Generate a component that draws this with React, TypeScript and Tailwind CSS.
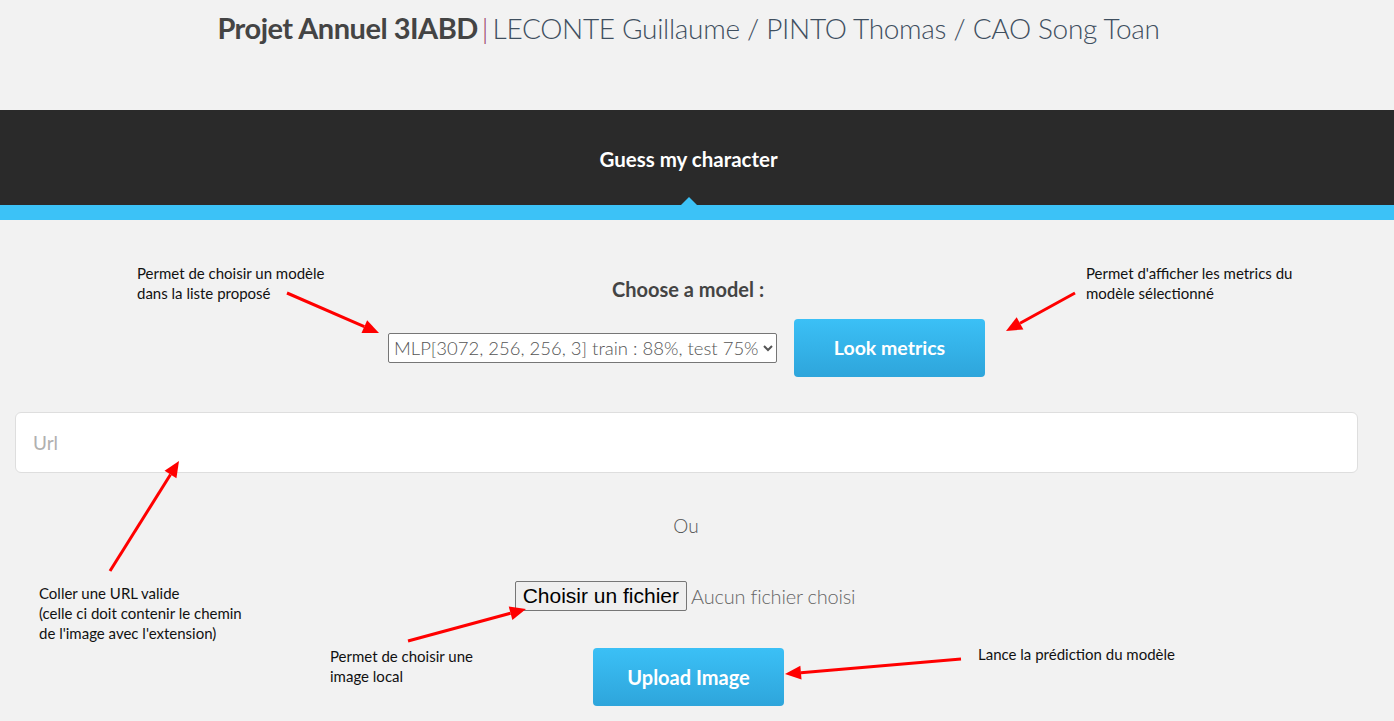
import React from "react";

const Arrow = ({ x1, y1, x2, y2 }: { x1: number; y1: number; x2: number; y2: number }) => {
  const a = Math.atan2(y2 - y1, x2 - x1);
  const L = 16;
  const W = 7;
  const bx = x2 - L * Math.cos(a);
  const by = y2 - L * Math.sin(a);
  const px = -Math.sin(a) * W;
  const py = Math.cos(a) * W;
  return (
    <g>
      <line x1={x1} y1={y1} x2={bx} y2={by} stroke="#ff0000" strokeWidth={3} />
      <polygon points={`${x2},${y2} ${bx + px},${by + py} ${bx - px},${by - py}`} fill="#ff0000" />
    </g>
  );
};

const Note = ({ x, y, children }: { x: number; y: number; children: React.ReactNode }) => (
  <div
    className="absolute text-[15px] leading-[20px] text-[#111] font-['Lato','Open_Sans',sans-serif]"
    style={{ left: x, top: y }}
  >
    {children}
  </div>
);

export default function App() {
  return (
    <div className="relative w-[1394px] h-[721px] overflow-hidden bg-[#f2f2f2] font-['Source_Sans_Pro','Lato','Open_Sans',sans-serif]">
      <header className="w-[1377px] h-[110px] flex justify-center pt-[9px]">
        <h1 className="leading-[38px] text-[#3f4f5f] font-light whitespace-nowrap">
          <span className="font-bold text-[#444] text-[29px] tracking-[-0.5px]">Projet Annuel 3IABD</span>
          <span className="text-[#9b3b6b] mx-[4px] text-[28px]">|</span>
          <span className="text-[28px] tracking-[-0.3px]">LECONTE Guillaume / PINTO Thomas / CAO Song Toan</span>
        </h1>
      </header>

      <nav className="relative h-[95px] bg-[#2a2a2a]">
        <div className="w-[1377px] h-full flex items-center justify-center">
          <span className="text-white font-bold text-[20.5px] mt-[3px]">Guess my character</span>
        </div>
        <div className="absolute bottom-0 left-[681px] w-0 h-0 border-l-[8px] border-r-[8px] border-b-[8px] border-l-transparent border-r-transparent border-b-[#3cc2f7]" />
      </nav>
      <div className="h-[15px] bg-[#3cc2f7]" />

      <main className="w-[1377px] flex flex-col items-center">
        <div className="mt-[57px] text-[20px] font-bold text-[#444] leading-[25px] ml-[-1px]">Choose a model :</div>
        <div className="flex items-center gap-[17px] mt-[17px] ml-[-4px]">
          <select className="w-[389px] h-[30px] border border-[#767676] bg-white text-[#555] text-[18.5px] font-light px-[1px] rounded-[2px]">
            <option>MLP[3072, 256, 256, 3] train : 88%, test 75%</option>
          </select>
          <button className="w-[191px] h-[58px] rounded-[4px] bg-gradient-to-b from-[#3bc0f6] to-[#2ea5db] text-white font-bold text-[19.5px]">
            Look metrics
          </button>
        </div>

        <div className="self-stretch pl-[15px] pr-[19px] mt-[35px]">
          <input
            placeholder="Url"
            className="w-full h-[61px] bg-white border border-[#dedede] rounded-[6px] px-[17px] text-[19px] placeholder:text-[#b0b0b0] outline-none"
          />
        </div>

        <div className="mt-[41px] text-[19px] text-[#555] font-light leading-[24px] ml-[-5px]">Ou</div>

        <div className="flex items-center mt-[43px] ml-[-7px]">
          <span className="h-[30px] px-[7px] border border-[#767676] bg-[#efefef] rounded-[2px] text-[21px] text-black font-['Liberation_Sans',Arial,sans-serif] leading-[28px]">
            Choisir un fichier
          </span>
          <span className="ml-[4px] text-[20px] text-[#666] font-light tracking-[-0.2px]">Aucun fichier choisi</span>
        </div>

        <button className="mt-[37px] w-[191px] h-[58px] rounded-[4px] bg-gradient-to-b from-[#3bc0f6] to-[#2ea5db] text-white font-bold text-[20px]">
          Upload Image
        </button>
      </main>

      <svg className="absolute inset-0 pointer-events-none" width={1394} height={721}>
        <Arrow x1={287} y1={293} x2={379} y2={333} />
        <Arrow x1={1075} y1={293} x2={1006} y2={331} />
        <Arrow x1={110} y1={571} x2={179} y2={461} />
        <Arrow x1={408} y1={641} x2={526} y2={609} />
        <Arrow x1={961} y1={659} x2={785} y2={674} />
      </svg>

      <Note x={137} y={263}>
        Permet de choisir un modèle
        <br />
        dans la liste proposé
      </Note>
      <Note x={1086} y={263}>
        Permet d'afficher les metrics du
        <br />
        modèle sélectionné
      </Note>
      <Note x={39} y={583}>
        Coller une URL valide
        <br />
        (celle ci doit contenir le chemin
        <br />
        de l'image avec l'extension)
      </Note>
      <Note x={330} y={646}>
        Permet de choisir une
        <br />
        image local
      </Note>
      <Note x={978} y={644}>
        Lance la prédiction du modèle
      </Note>
    </div>
  );
}
